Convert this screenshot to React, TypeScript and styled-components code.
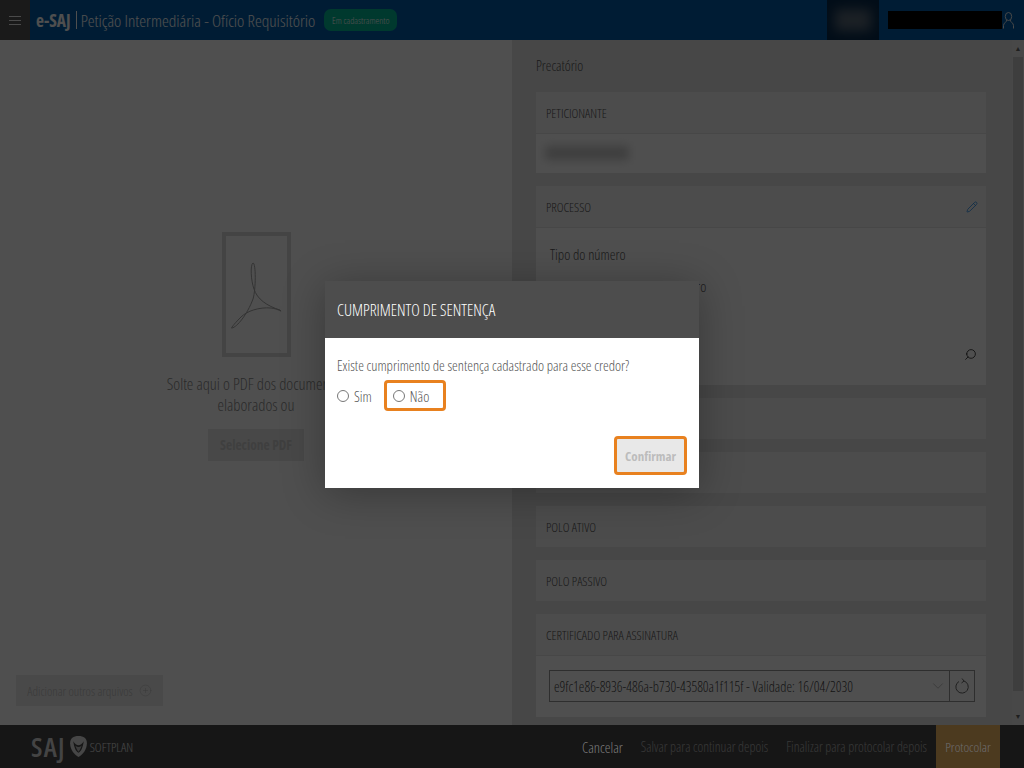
import React from "react";
import styled, { createGlobalStyle } from "styled-components";
import { Pencil, Search, ChevronDown, CirclePlus } from "lucide-react";

const GlobalStyle = createGlobalStyle`
  html, body {
    margin: 0;
    padding: 0;
    height: 100%;
    overflow: hidden;
  }
  * {
    box-sizing: border-box;
  }
  body {
    font-family: "Open Sans", "Liberation Sans", sans-serif;
    font-stretch: 82%;
    color: #222;
  }
`;

const App = () => {
  return (
    <>
      <GlobalStyle />
      <Page>
        <Header>
          <MenuButton>
            <span />
            <span />
            <span />
          </MenuButton>
          <Brand>e-SAJ</Brand>
          <BrandDivider />
          <Title>Petição Intermediária - Ofício Requisitório</Title>
          <StatusPill>Em cadastramento</StatusPill>
          <HeaderRight>
            <BlurBox>
              <BlurSpot />
            </BlurBox>
            <UserName />
            <svg width="11" height="17" viewBox="0 0 11 17" fill="none" stroke="#e8e8e8" strokeWidth="1">
              <ellipse cx="5.5" cy="4.5" rx="3.2" ry="4" />
              <path d="M3.8 8c0 2-3.3 3-3.3 5.5V16.5M7.2 8c0 2 3.3 3 3.3 5.5V16.5" />
            </svg>
          </HeaderRight>
        </Header>
        <Main>
          <LeftPane>
            <PdfFrame>
              <svg width="54" height="72" viewBox="0 0 54 72" fill="none" stroke="#a5a5a5" strokeWidth="1">
                <path d="M24 4C21 6 22 22 25 30C28 40 38 47 51 51C54 54 50 50 42 49C30 48 18 52 12 58C6 64 1 70 3 69C8 68 18 56 24 40C27 30 27 4 24 4Z" />
              </svg>
            </PdfFrame>
            <DropText>
              Solte aqui o PDF dos documentos
              <br />
              elaborados ou
            </DropText>
            <SelectPdf>Selecione PDF</SelectPdf>
            <AddFiles>
              Adicionar outros arquivos
              <CirclePlus size={13} strokeWidth={1} />
            </AddFiles>
          </LeftPane>
          <RightPane>
            <FormColumn>
              <SectionTitle>Precatório</SectionTitle>
              <Card>
                <CardHeader>PETICIONANTE</CardHeader>
                <CardBody $height={40}>
                  <BlurredName />
                </CardBody>
              </Card>
              <Card>
                <CardHeader>
                  PROCESSO
                  <Pencil size={12} strokeWidth={1.6} color="#2a8fe8" />
                </CardHeader>
                <CardBody $height={158}>
                  <FieldLabel>Tipo do número</FieldLabel>
                  <OptionRow>
                    <FormOption $width={111}>
                      <FormRadio $checked />
                      Número unificado
                    </FormOption>
                    <FormOption>
                      <FormRadio />
                      Outro
                    </FormOption>
                  </OptionRow>
                  <SearchSpot>
                    <Search size={13} strokeWidth={1.5} color="#222" />
                  </SearchSpot>
                </CardBody>
              </Card>
              <Card>
                <CardHeader>DADOS</CardHeader>
              </Card>
              <Card>
                <CardHeader>DADOS DO OFÍCIO REQUISITÓRIO</CardHeader>
              </Card>
              <Card>
                <CardHeader>POLO ATIVO</CardHeader>
              </Card>
              <Card>
                <CardHeader>POLO PASSIVO</CardHeader>
              </Card>
              <Card>
                <CardHeader>CERTIFICADO PARA ASSINATURA</CardHeader>
                <CardBody $height={62}>
                  <CertRow>
                    <CertSelect>
                      e9fc1e86-8936-486a-b730-43580a1f115f - Validade: 16/04/2030
                      <ChevronDown size={18} strokeWidth={0.8} color="#999" />
                    </CertSelect>
                    <CertRefresh>
                      <svg width="14" height="18" viewBox="0 0 14 18" fill="none" stroke="#666" strokeWidth="1">
                        <path d="M4 4.5A6.2 6.2 0 1 0 9 4" />
                        <path d="M7 1.5L9 4L6.5 6" />
                      </svg>
                    </CertRefresh>
                  </CertRow>
                </CardBody>
              </Card>
            </FormColumn>
            <Scrollbar>
              <ScrollArrow>▲</ScrollArrow>
              <ScrollTrack>
                <ScrollThumb />
              </ScrollTrack>
              <ScrollArrow>▼</ScrollArrow>
            </Scrollbar>
          </RightPane>
        </Main>
        <Footer>
          <LogoGroup>
            <SajMark>SAJ</SajMark>
            <svg width="17" height="21" viewBox="0 0 16 20">
              <path d="M8 0c5 0 8 2 8 7 0 6-4 11-8 13C4 18 0 13 0 7c0-5 3-7 8-7z" fill="#e0e0e0" />
              <path d="M3 5c3 5 7 5 10 0-1 6-2 9-5 11-3-2-4-5-5-11z" fill="#484848" />
              <path d="M5 9c2 2 4 2 6 0-1 3-2 5-3 6-1-1-2-3-3-6z" fill="#bdbdbd" />
            </svg>
            <SoftplanMark>SOFTPLAN</SoftplanMark>
          </LogoGroup>
          <FooterActions>
            <CancelLink>Cancelar</CancelLink>
            <FooterLink>Salvar para continuar depois</FooterLink>
            <FooterLink>Finalizar para protocolar depois</FooterLink>
            <ProtocolButton>
              <ProtocolLabel>Protocolar</ProtocolLabel>
            </ProtocolButton>
          </FooterActions>
        </Footer>
        <Overlay />
        <Modal>
          <ModalHeader>CUMPRIMENTO DE SENTENÇA</ModalHeader>
          <ModalBody>
            <Question>Existe cumprimento de sentença cadastrado para esse credor?</Question>
            <RadioRow>
              <RadioOption>
                <RadioDot />
                Sim
              </RadioOption>
              <HighlightedOption>
                <RadioDot />
                Não
              </HighlightedOption>
            </RadioRow>
            <ModalFooter>
              <ConfirmButton>Confirmar</ConfirmButton>
            </ModalFooter>
          </ModalBody>
        </Modal>
      </Page>
    </>
  );
};

const Page = styled.div`
  position: relative;
  width: 1024px;
  height: 768px;
  display: flex;
  flex-direction: column;
  overflow: hidden;
  background: #fff;
`;

const Header = styled.header`
  height: 40px;
  flex: none;
  display: flex;
  align-items: center;
  background: #005ca9;
  color: #fff;
`;

const MenuButton = styled.div`
  width: 30px;
  height: 40px;
  background: #555;
  display: flex;
  flex-direction: column;
  justify-content: center;
  align-items: center;
  gap: 3px;
  margin-right: 6px;
  span {
    width: 12px;
    height: 1px;
    background: #eee;
  }
`;

const Brand = styled.span`
  font-size: 17.4px;
  font-weight: 700;
`;

const BrandDivider = styled.span`
  width: 1px;
  height: 18px;
  margin: 0 4px 0 5px;
  background: #fff;
`;

const Title = styled.span`
  font-size: 17.3px;
  font-weight: 300;
`;

const StatusPill = styled.span`
  margin-left: 9px;
  height: 22px;
  width: 73px;
  display: flex;
  align-items: center;
  justify-content: center;
  border-radius: 7px;
  background: #00b896;
  font-size: 9.5px;
  font-weight: 300;
  white-space: nowrap;
`;

const HeaderRight = styled.div`
  margin-left: auto;
  display: flex;
  align-items: center;
  padding-right: 10px;
`;

const BlurBox = styled.div`
  width: 52px;
  height: 40px;
  margin-right: 9px;
  background: #062a4d;
  display: flex;
  align-items: center;
  justify-content: center;
  overflow: hidden;
`;

const BlurSpot = styled.div`
  width: 36px;
  height: 22px;
  background: #5a6a78;
  filter: blur(6px);
`;

const UserName = styled.div`
  width: 114px;
  height: 18px;
  background: #000;
  margin-right: 1px;
`;

const Main = styled.main`
  flex: 1;
  display: flex;
  min-height: 0;
`;

const LeftPane = styled.section`
  position: relative;
  width: 512px;
  display: flex;
  flex-direction: column;
  align-items: center;
  padding-top: 192px;
  background: #fff;
`;

const PdfFrame = styled.div`
  width: 69px;
  height: 125px;
  border: 4px solid #dcdcdc;
  display: flex;
  align-items: center;
  justify-content: center;
`;

const DropText = styled.p`
  margin: 16px 0 0;
  font-size: 16.4px;
  line-height: 21px;
  font-weight: 300;
  text-align: center;
  color: #888;
`;

const SelectPdf = styled.div`
  margin-top: 14px;
  width: 96px;
  height: 32px;
  display: flex;
  align-items: center;
  justify-content: center;
  background: #e8e8e8;
  color: #ccc;
  font-size: 13.5px;
  font-weight: 700;
`;

const AddFiles = styled.div`
  position: absolute;
  left: 16px;
  bottom: 19px;
  width: 147px;
  height: 31px;
  display: flex;
  align-items: center;
  justify-content: center;
  gap: 6px;
  background: #ececec;
  color: #bbb;
  font-size: 12.7px;
  font-weight: 300;
  white-space: nowrap;
`;

const RightPane = styled.section`
  width: 512px;
  display: flex;
  background: #e6e6e6;
`;

const FormColumn = styled.div`
  width: 500px;
  padding: 0 26px 0 24px;
`;

const SectionTitle = styled.h2`
  margin: 0;
  height: 51px;
  margin-bottom: 1px;
  display: flex;
  align-items: center;
  font-size: 14.2px;
  font-weight: 300;
  color: #555;
`;

const Card = styled.div`
  margin-bottom: 13px;
  background: #f4f4f4;
`;

const CardHeader = styled.div`
  height: 41px;
  padding: 0 8px 0 10px;
  display: flex;
  align-items: center;
  justify-content: space-between;
  font-size: 12.9px;
  font-weight: 300;
  color: #555;
  background: #f4f4f4;
`;

const CardBody = styled.div<{ $height: number }>`
  position: relative;
  height: ${(p) => p.$height}px;
  padding: 16px 14px;
  background: #fff;
  border-top: 1px solid #e4e4e4;
`;

const BlurredName = styled.div`
  width: 84px;
  height: 14px;
  margin: -4px 0 0 -5px;
  background: #c8c8c8;
  filter: blur(5px);
`;

const FieldLabel = styled.div`
  font-size: 14.5px;
  line-height: 20px;
  font-weight: 300;
  color: #555;
  margin-top: 1px;
`;

const OptionRow = styled.div`
  display: flex;
  margin-top: 12px;
`;

const FormOption = styled.div<{ $width?: number }>`
  width: ${(p) => (p.$width ? `${p.$width}px` : "auto")};
  display: flex;
  align-items: center;
  gap: 6px;
  font-size: 14.5px;
  line-height: 20px;
  font-weight: 300;
  color: #555;
  white-space: nowrap;
`;

const FormRadio = styled.span<{ $checked?: boolean }>`
  width: 12px;
  height: 12px;
  border-radius: 50%;
  border: 2px solid ${(p) => (p.$checked ? "#2a8fe8" : "#777")};
`;

const SearchSpot = styled.div`
  position: absolute;
  right: 9px;
  top: 120px;
  display: flex;
  transform: scaleX(-1);
`;

const CertRow = styled.div`
  display: flex;
  margin: -2px 0 0 -1px;
  width: 426px;
  height: 32px;
`;

const CertSelect = styled.div`
  flex: 1;
  display: flex;
  align-items: center;
  justify-content: space-between;
  padding: 0 2px 0 4px;
  border: 1px solid #949494;
  font-size: 14.1px;
  font-weight: 300;
  color: #444;
  white-space: nowrap;
`;

const CertRefresh = styled.div`
  width: 25px;
  display: flex;
  align-items: center;
  justify-content: center;
  border: 1px solid #949494;
  border-left: none;
`;

const Scrollbar = styled.div`
  width: 12px;
  display: flex;
  flex-direction: column;
  background: #e9e9e9;
`;

const ScrollArrow = styled.div`
  height: 17px;
  font-size: 7px;
  display: flex;
  align-items: center;
  justify-content: center;
  color: #666;
`;

const ScrollTrack = styled.div`
  flex: 1;
  padding: 0 1px;
`;

const ScrollThumb = styled.div`
  height: 634px;
  background: #c8c8c8;
`;

const Footer = styled.footer`
  height: 43px;
  flex: none;
  display: flex;
  align-items: center;
  justify-content: space-between;
  padding: 0 24px 0 31px;
  background: #484848;
`;

const LogoGroup = styled.div`
  display: flex;
  align-items: center;
  gap: 4px;
`;

const SajMark = styled.span`
  font-size: 27px;
  line-height: 30px;
  font-stretch: 75%;
  font-weight: 600;
  letter-spacing: 1.2px;
  color: #dcdcdc;
`;

const SoftplanMark = styled.span`
  margin-left: -1px;
  font-size: 13px;
  font-stretch: 75%;
  font-weight: 300;
  color: #e0e0e0;
`;

const FooterActions = styled.div`
  display: flex;
  align-items: center;
  height: 43px;
  gap: 18px;
`;

const FooterLink = styled.span`
  font-size: 13.7px;
  font-weight: 300;
  color: #b4b4b4;
  white-space: nowrap;
`;

const CancelLink = styled(FooterLink)`
  position: relative;
  z-index: 1;
  font-size: 14.6px;
  color: #7d7d7d;
`;

const ProtocolButton = styled.div`
  width: 64px;
  height: 43px;
  margin-left: -9px;
  display: flex;
  align-items: center;
  justify-content: center;
  background: #f5ba66;
`;

const ProtocolLabel = styled.span`
  position: relative;
  z-index: 1;
  color: #6e6d70;
  font-size: 13.6px;
  font-weight: 300;
`;

const Overlay = styled.div`
  position: absolute;
  inset: 0;
  background: rgba(0, 0, 0, 0.69);
`;

const Modal = styled.div`
  position: absolute;
  left: 325px;
  top: 281px;
  width: 374px;
  height: 207px;
  box-shadow: 0 5px 40px rgba(0, 0, 0, 0.3);
`;

const ModalHeader = styled.div`
  height: 57px;
  padding: 0 12px;
  display: flex;
  align-items: center;
  background: #4d4d4d;
  color: #fff;
  font-size: 16.2px;
  font-weight: 300;
`;

const ModalBody = styled.div`
  height: 150px;
  padding: 18px 12px 0;
  background: #fff;
`;

const Question = styled.div`
  font-size: 14.45px;
  line-height: 19px;
  font-weight: 300;
  color: #555;
`;

const RadioRow = styled.div`
  display: flex;
  align-items: center;
  margin-top: 5px;
  gap: 12px;
`;

const RadioOption = styled.div`
  display: flex;
  align-items: center;
  gap: 5px;
  font-size: 14.6px;
  line-height: 20px;
  font-weight: 300;
  color: #555;
`;

const HighlightedOption = styled(RadioOption)`
  width: 62px;
  height: 31px;
  padding-left: 6px;
  border: 3px solid #e8811f;
  border-radius: 4px;
`;

const RadioDot = styled.span`
  width: 12px;
  height: 12px;
  border: 1px solid #777;
  border-radius: 50%;
`;

const ModalFooter = styled.div`
  display: flex;
  justify-content: flex-end;
  margin-top: 25px;
`;

const ConfirmButton = styled.div`
  width: 73px;
  height: 39px;
  display: flex;
  align-items: center;
  justify-content: center;
  background: #e8e8e8;
  border: 3px solid #e8811f;
  border-radius: 4px;
  color: #bcbcbc;
  font-size: 13px;
  font-weight: 700;
`;

export default App;
